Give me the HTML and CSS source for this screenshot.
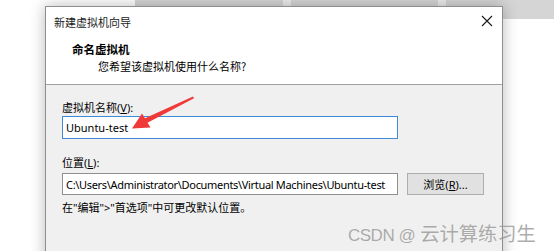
FILE: index.html
```html
<!DOCTYPE html>
<html lang="zh-CN">
<head>
<meta charset="utf-8">
<title>新建虚拟机向导</title>
<link rel="stylesheet" href="styles.css">
</head>
<body>
<div class="desktop">
  <div class="band">
    <div class="band-gap"></div>
    <div class="band-seg seg-a"></div>
    <div class="band-strip"></div>
    <div class="band-seg seg-b"></div>
    <div class="band-strip"></div>
    <div class="band-seg seg-c"></div>
  </div>

  <div class="dialog">
    <div class="header">
      <div class="titlebar">
        <span class="title">新建虚拟机向导</span>
        <svg class="close" width="12" height="12" viewBox="0 0 12 12"><path d="M1 1 L11 11 M11 1 L1 11" stroke="#1a1a1a" stroke-width="1.1" fill="none"/></svg>
      </div>
      <div class="head-title">命名虚拟机</div>
      <div class="head-sub">您希望该虚拟机使用什么名称?</div>
    </div>
    <div class="body">
      <div class="label">虚拟机名称(<u>V</u>):</div>
      <div class="input input-focus">Ubuntu-test</div>
      <div class="label label-loc">位置(<u>L</u>):</div>
      <div class="row">
        <div class="input input-path">C:\Users\Administrator\Documents\Virtual Machines\Ubuntu-test</div>
        <div class="button">浏览(<u>R</u>)...</div>
      </div>
      <div class="note">在"编辑"&gt;"首选项"中可更改默认位置。</div>
    </div>
  </div>

  <svg class="arrow" width="554" height="251" viewBox="0 0 554 251">
    <polygon points="132,128.5 150.5,127.5 147.5,122.8 194,98.2 193,96.6 145,118.2 142,113.5" fill="#f03a3a"/>
  </svg>

  <div class="watermark"><span class="wm-latin">CSDN @</span><span class="wm-cjk">云计算练习生</span></div>
</div>
</body>
</html>
```

FILE: styles.css
```css
html, body {
  margin: 0;
  padding: 0;
  background: #ffffff;
}

.desktop {
  position: relative;
  width: 554px;
  height: 251px;
  overflow: hidden;
  background: #ffffff;
  font-family: "Noto Sans", "Noto Sans CJK SC", sans-serif;
}

.band {
  display: flex;
  height: 19px;
}
.band-gap { width: 135px; background: #ffffff; }
.band-seg { background: #d5d5d5; }
.seg-a { width: 148px; }
.seg-b { width: 147px; }
.seg-c { flex: 1; }
.band-strip { width: 8px; background: #ececec; }

.dialog {
  position: absolute;
  left: 45px;
  top: 6px;
  width: 458px;
  height: 270px;
  box-sizing: border-box;
  border: 1px solid #8e8e8e;
  background: #f0f0f0;
  box-shadow: 0 0 14px rgba(0, 0, 0, 0.28);
  display: flex;
  flex-direction: column;
}

.header {
  background: #ffffff;
  border-bottom: 1px solid #a0a0a0;
  padding-bottom: 9px;
}

.titlebar {
  height: 29px;
  display: flex;
  align-items: center;
  justify-content: space-between;
  padding: 0 8px 0 8px;
}
.title {
  font-family: "Noto Sans CJK SC", sans-serif;
  font-size: 11px;
  color: #1a1a1a;
}
.close {
  margin-right: 1px;
  margin-top: -2px;
}

.head-title {
  margin-top: 5px;
  padding-left: 26px;
  font-family: "Noto Sans CJK SC", sans-serif;
  font-weight: 700;
  font-size: 11.5px;
  line-height: 17px;
  color: #000;
}
.head-sub {
  padding-left: 52px;
  font-family: "Noto Sans CJK SC", sans-serif;
  font-size: 11px;
  line-height: 17px;
  color: #000;
}

.body {
  padding: 14px 0 0 16px;
  display: flex;
  flex-direction: column;
  align-items: flex-start;
}

.label {
  font-family: "Noto Sans", "Noto Sans CJK SC", sans-serif;
  font-size: 11px;
  line-height: 17px;
  color: #000;
}
.label-loc {
  margin-top: 15px;
  margin-bottom: 2px;
}
u { text-underline-offset: 1px; }

.input {
  box-sizing: border-box;
  width: 336px;
  height: 23px;
  background: #ffffff;
  border: 1px solid #7a7a7a;
  padding: 0 0 0 3px;
  display: flex;
  align-items: center;
  font-family: "Noto Sans", sans-serif;
  font-size: 11px;
  color: #000;
  white-space: nowrap;
  overflow: hidden;
}
.input-focus {
  border-color: #3f8ad8;
}
.input-path {
  height: 22px;
  border-color: #8f8f8f;
  letter-spacing: -0.32px;
}

.row {
  display: flex;
  gap: 9px;
}

.button {
  box-sizing: border-box;
  width: 77px;
  height: 22px;
  background: #e1e1e1;
  border: 1px solid #adadad;
  display: flex;
  align-items: center;
  justify-content: center;
  font-family: "Noto Sans", "Noto Sans CJK SC", sans-serif;
  font-size: 11px;
  color: #000;
}

.note {
  margin-top: 4px;
  font-family: "Noto Sans", "Noto Sans CJK SC", sans-serif;
  font-size: 11px;
  line-height: 17px;
  color: #000;
}

.arrow {
  position: absolute;
  left: 0;
  top: 0;
  pointer-events: none;
}

.watermark {
  position: absolute;
  left: 348px;
  top: 221px;
  line-height: 24px;
  color: rgba(150, 150, 150, 0.78);
  white-space: nowrap;
  display: flex;
  align-items: baseline;
}
.wm-latin {
  font-family: "Liberation Sans", sans-serif;
  font-size: 17px;
  letter-spacing: -0.5px;
}
.wm-cjk {
  font-family: "Noto Sans CJK SC", sans-serif;
  font-size: 19.3px;
  margin-left: 5px;
}
```
